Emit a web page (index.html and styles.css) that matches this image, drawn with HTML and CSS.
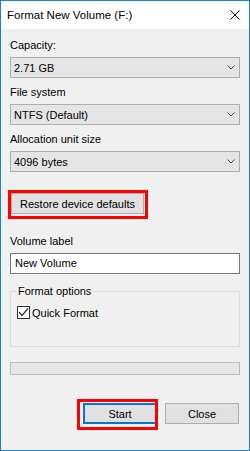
FILE: index.html
```html
<!DOCTYPE html>
<html lang="en">
<head>
    <meta charset="UTF-8">
    <meta name="viewport" content="width=device-width, initial-scale=1.0">
    <title>Format New Volume (F:)</title>
    <link rel="stylesheet" href="styles.css">
</head>
<body>
    <div class="window">
        <div class="titlebar">
            <span class="title">Format New Volume (F:)</span>
            <svg class="close-x" width="10" height="10" viewBox="0 0 10 10">
                <path d="M0.5 0.5 L9.5 9.5 M9.5 0.5 L0.5 9.5" stroke="#000" stroke-width="1" fill="none"/>
            </svg>
        </div>

        <div class="content">
            <div class="field">
                <div class="label">Capacity:</div>
                <div class="combo">
                    <span>2.71 GB</span>
                    <svg class="chevron" width="8" height="5" viewBox="0 0 8 5"><polyline points="0.5,0.5 4,4 7.5,0.5" fill="none" stroke="#444" stroke-width="1"/></svg>
                </div>
            </div>

            <div class="field">
                <div class="label">File system</div>
                <div class="combo">
                    <span>NTFS (Default)</span>
                    <svg class="chevron" width="8" height="5" viewBox="0 0 8 5"><polyline points="0.5,0.5 4,4 7.5,0.5" fill="none" stroke="#444" stroke-width="1"/></svg>
                </div>
            </div>

            <div class="field">
                <div class="label">Allocation unit size</div>
                <div class="combo">
                    <span>4096 bytes</span>
                    <svg class="chevron" width="8" height="5" viewBox="0 0 8 5"><polyline points="0.5,0.5 4,4 7.5,0.5" fill="none" stroke="#444" stroke-width="1"/></svg>
                </div>
            </div>

            <button class="btn btn-restore marked">Restore device defaults</button>

            <div class="label label-volume">Volume label</div>
            <div class="textbox">New Volume</div>

            <fieldset class="group">
                <legend>Format options</legend>
                <label class="check">
                    <span class="check-box">
                        <svg width="11" height="11" viewBox="0 0 11 11"><polyline points="1,5 4,8.5 10,1.5" fill="none" stroke="#333" stroke-width="1.2"/></svg>
                    </span>
                    Quick Format
                </label>
            </fieldset>

            <div class="progress"></div>

            <div class="actions">
                <button class="btn btn-default btn-start marked">Start</button>
                <button class="btn">Close</button>
            </div>
        </div>
    </div>
</body>
</html>
```

FILE: styles.css
```css
body {
    margin: 0;
    font-family: "Liberation Sans", Arial, sans-serif;
    font-size: 11px;
    color: #000;
}
.window {
    width: 250px;
    height: 451px;
    box-sizing: border-box;
    border: 1px solid #1883d7;
    background-color: #f0f0f0;
}
.titlebar {
    height: 28px;
    background-color: #fff;
    display: flex;
    align-items: center;
    justify-content: space-between;
    padding-left: 6px;
}
.title {
    font-size: 11.5px;
    line-height: 28px;
}
.close-x {
    margin-right: 9px;
}
.content {
    padding: 9px 9px 0;
}
.field {
    margin-bottom: 7px;
}
.label {
    line-height: 15px;
    margin-bottom: 4px;
}
.combo {
    height: 21px;
    box-sizing: border-box;
    border: 1px solid #adadad;
    background-color: #e5e5e5;
    display: flex;
    align-items: center;
    justify-content: space-between;
    padding: 0 4px 0 3px;
}
.btn {
    font-family: inherit;
    font-size: 11px;
    color: #000;
    height: 21px;
    box-sizing: border-box;
    border: 1px solid #adadad;
    background-color: #e1e1e1;
    padding: 0;
    width: 74px;
    position: relative;
}
.btn-default {
    border: 2px solid #0078d7;
}
.btn-restore {
    display: block;
    width: 133px;
    margin: 21px 0 0 1px;
}
/* red annotation boxes drawn over the screenshot */
.marked::after {
    content: "";
    position: absolute;
    top: -4px;
    left: -4px;
    right: -5px;
    bottom: -6px;
    border: 3px solid #f00;
}
.btn-start::after {
    top: -6px;
    left: -8px;
    right: -3px;
    bottom: -8px;
}
.label-volume {
    margin-top: 20px;
}
.textbox {
    height: 21px;
    box-sizing: border-box;
    border: 1px solid #7a7a7a;
    background-color: #fff;
    padding-left: 4px;
    line-height: 19px;
}
.group {
    margin: 10px 0 0;
    padding: 0 5px 27px;
    border: 1px solid #dcdcdc;
}
.group legend {
    line-height: 15px;
    padding: 0 2px;
}
.check {
    display: flex;
    align-items: center;
    gap: 2px;
    margin: 7px 0 0 1px;
}
.check-box {
    width: 13px;
    height: 13px;
    box-sizing: border-box;
    border: 1px solid #333;
    background-color: #fff;
    display: flex;
    align-items: center;
    justify-content: center;
}
.progress {
    margin-top: 15px;
    height: 13px;
    box-sizing: border-box;
    border: 1px solid #bcbcbc;
    background-color: #e6e6e6;
}
.actions {
    margin-top: 28px;
    display: flex;
    justify-content: flex-end;
    gap: 8px;
    padding-right: 1px;
}
```
